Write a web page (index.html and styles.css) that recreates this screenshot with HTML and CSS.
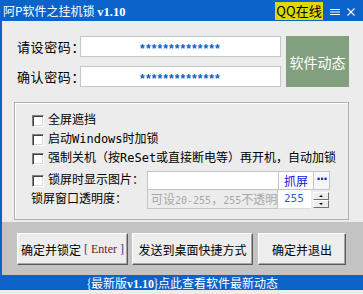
FILE: index.html
```html
<!DOCTYPE html>
<html lang="zh-CN">
<head>
<meta charset="utf-8">
<title>阿P软件之挂机锁 v1.10</title>
<link rel="stylesheet" href="styles.css">
</head>
<body>
<div class="win">
  <div class="titlebar">
    <span class="title">阿P软件之挂机锁 <span class="ver">v1.10</span></span>
    <span class="qq">QQ在线</span>
    <svg class="menu" width="10" height="7" viewBox="0 0 10 7"><rect x="0" y="0" width="10" height="1" fill="#fff"/><rect x="0" y="2.5" width="10" height="1" fill="#fff"/><rect x="0" y="5" width="10" height="1" fill="#fff"/></svg>
    <svg class="close" width="8" height="8" viewBox="0 0 8 8"><path d="M0.5 0.5L7.5 7.5M7.5 0.5L0.5 7.5" stroke="#fff" stroke-width="1.1"/></svg>
  </div>
  <div class="main">
    <div class="pw">
      <span class="lbl">请设密码：</span>
      <div class="field pass">**************</div>
      <div class="news">软件动态</div>
      <span class="lbl">确认密码：</span>
      <div class="field pass">**************</div>
    </div>
    <div class="group">
      <div class="row"><span class="cb"></span><span>全屏遮挡</span></div>
      <div class="row"><span class="cb"></span><span>启动Windows时加锁</span></div>
      <div class="row"><span class="cb"></span><span>强制关机（按ReSet或直接断电等）再开机，自动加锁</span></div>
      <div class="row r4"><span class="cb"></span><span class="lbl4">锁屏时显示图片：</span>
        <div class="pathbox"><span class="path"></span><span class="grab">抓屏</span><span class="dots">···</span></div>
      </div>
      <div class="row r5"><span class="lbl5">锁屏窗口透明度：</span>
        <div class="hint">可设<span class="d">20-255</span>，<span class="d">255</span>不透明</div>
        <div class="num">255</div>
        <div class="spin"><span class="up"></span><span class="dn"></span></div>
      </div>
    </div>
  </div>
  <div class="btnbar">
    <div class="btn b1">确定并锁定 <span class="enter"><span class="br">[</span> Enter <span class="br">]</span></span></div>
    <div class="btn b2">发送到桌面快捷方式</div>
    <div class="btn b3">确定并退出</div>
  </div>
  <div class="status">{最新版<span class="ver2">v1.10</span>}点此查看软件最新动态</div>
</div>
<div class="below"></div>
</body>
</html>
```
FILE: styles.css
```css
* { box-sizing: border-box; margin: 0; padding: 0; }
html, body { width: 363px; height: 294px; overflow: hidden; background: #e9edf2; }
body { font-family: "Noto Sans CJK SC", sans-serif; font-size: 12px; color: #000; }

.win { width: 363px; border-left: 2px solid #0b63c9; background: #ececec; }

.titlebar { height: 21px; background: #0b63c9; display: flex; align-items: flex-start; color: #fff; padding: 0 8px 0 1px; }
.title { flex: 1; font-size: 12px; line-height: 21px; white-space: nowrap; }
.ver { font-family: "Liberation Serif", serif; font-weight: bold; font-size: 12.5px; }
.qq { margin-top: 2px; width: 48px; height: 18px; background: #dcda00; color: #000; font-size: 13px; line-height: 18px; text-align: center; }
.menu { margin: 9px 0 0 7px; }
.close { margin: 8px 0 0 7px; }

.main { height: 201px; padding: 15px 0 0 15px; }
.pw { display: grid; grid-template-columns: 58px 201px 63px; grid-template-rows: 21px 21px; column-gap: 5px; row-gap: 9px; }
.lbl { font-size: 13px; line-height: 21px; letter-spacing: 0.6px; white-space: nowrap; }
.field { background: #fff; border: 1px solid #c6c6c6; }
.pass { color: #0a5fc4; text-align: center; font: bold 12px/19px "Liberation Sans", sans-serif; letter-spacing: 1.1px; padding-top: 3px; }
.news { grid-column: 3; grid-row: 1 / 3; background: #829f7f; color: #fff; font-size: 14px; display: flex; align-items: center; justify-content: center; }

.group { margin: 15px 0 0 -3px; width: 335px; height: 118px; border: 1px solid #b0b0b0; box-shadow: inset 1px 1px #fff; padding: 8px 0 0 17px; }
.row { display: flex; align-items: center; height: 19px; line-height: 19px; white-space: nowrap; font-family: "DejaVu Sans Mono", "Noto Sans CJK SC", monospace; font-size: 12px; }
.cb { width: 12px; height: 12px; margin-right: 4px; background: #fff; border: 1px solid; border-color: #808080 #fff #fff #808080; box-shadow: inset 1px 1px #404040, inset -1px -1px #d8d8d8; flex: none; }
.r4 { margin-top: 3px; }
.lbl4 { width: 99px; }
.pathbox { display: flex; height: 19px; border: 1px solid #c4c4c4; background: #fff; }
.path { width: 130px; }
.grab { width: 35px; border-left: 1px solid #c4c4c4; color: #1414e6; text-align: center; line-height: 17px; font-family: "Noto Sans CJK SC", sans-serif; }
.dots { width: 16px; border-left: 1px solid #c4c4c4; background: #f7f7f7; color: #1414e6; text-align: center; line-height: 15px; font-weight: bold; font-family: "DejaVu Sans", sans-serif; letter-spacing: -1px; }
.lbl5 { width: 116px; margin-left: -1px; }
.hint { width: 131px; height: 19px; border: 1px solid #c4c4c4; border-top: none; background: #ececec; color: #a8a8a8; padding-left: 3px; line-height: 18px; overflow: hidden; font-family: "Noto Sans CJK SC", sans-serif; }
.hint .d { font-family: "DejaVu Sans Mono", monospace; font-size: 10px; }
.num { width: 33px; height: 19px; background: #fff; border-bottom: 1px solid #dcdcdc; color: #2264d6; padding-left: 6px; line-height: 18px; font-size: 11px; }
.spin { width: 16px; height: 16px; margin-left: 2px; display: flex; flex-direction: column; }
.spin span { flex: 1; background: #ececec; border: 1px solid; border-color: #fff #707070 #707070 #fff; position: relative; }
.spin .up::after, .spin .dn::after { content: ""; position: absolute; left: 5px; top: 2px; border-left: 2px solid transparent; border-right: 2px solid transparent; }
.spin .up::after { border-bottom: 2px solid #000; }
.spin .dn::after { border-top: 2px solid #000; }

.btnbar { height: 53px; background: #c3c3c3; padding: 11px 0 0 15px; display: flex; }
.btn { height: 32px; background: #ededed; border: 1px solid; border-color: #fff #5a5a5a #5a5a5a #fff; box-shadow: inset -1px -1px #a6a6a6; font-size: 12px; display: flex; align-items: center; justify-content: center; white-space: nowrap; }
.b1 { width: 111px; }
.b2 { width: 121px; margin-left: 4px; }
.b3 { width: 88px; margin-left: 5px; }
.enter { font-family: "Liberation Serif", serif; font-size: 12px; color: #6a2418; margin-left: 3px; }
.enter .br { color: #4a2a9a; }

.status { height: 15px; background: #0b63c9; color: #fff; text-align: center; font-size: 12px; line-height: 15px; white-space: nowrap; }
.ver2 { font-family: "Liberation Serif", serif; font-weight: bold; }
.below { height: 4px; background: #e9edf2; }
```
